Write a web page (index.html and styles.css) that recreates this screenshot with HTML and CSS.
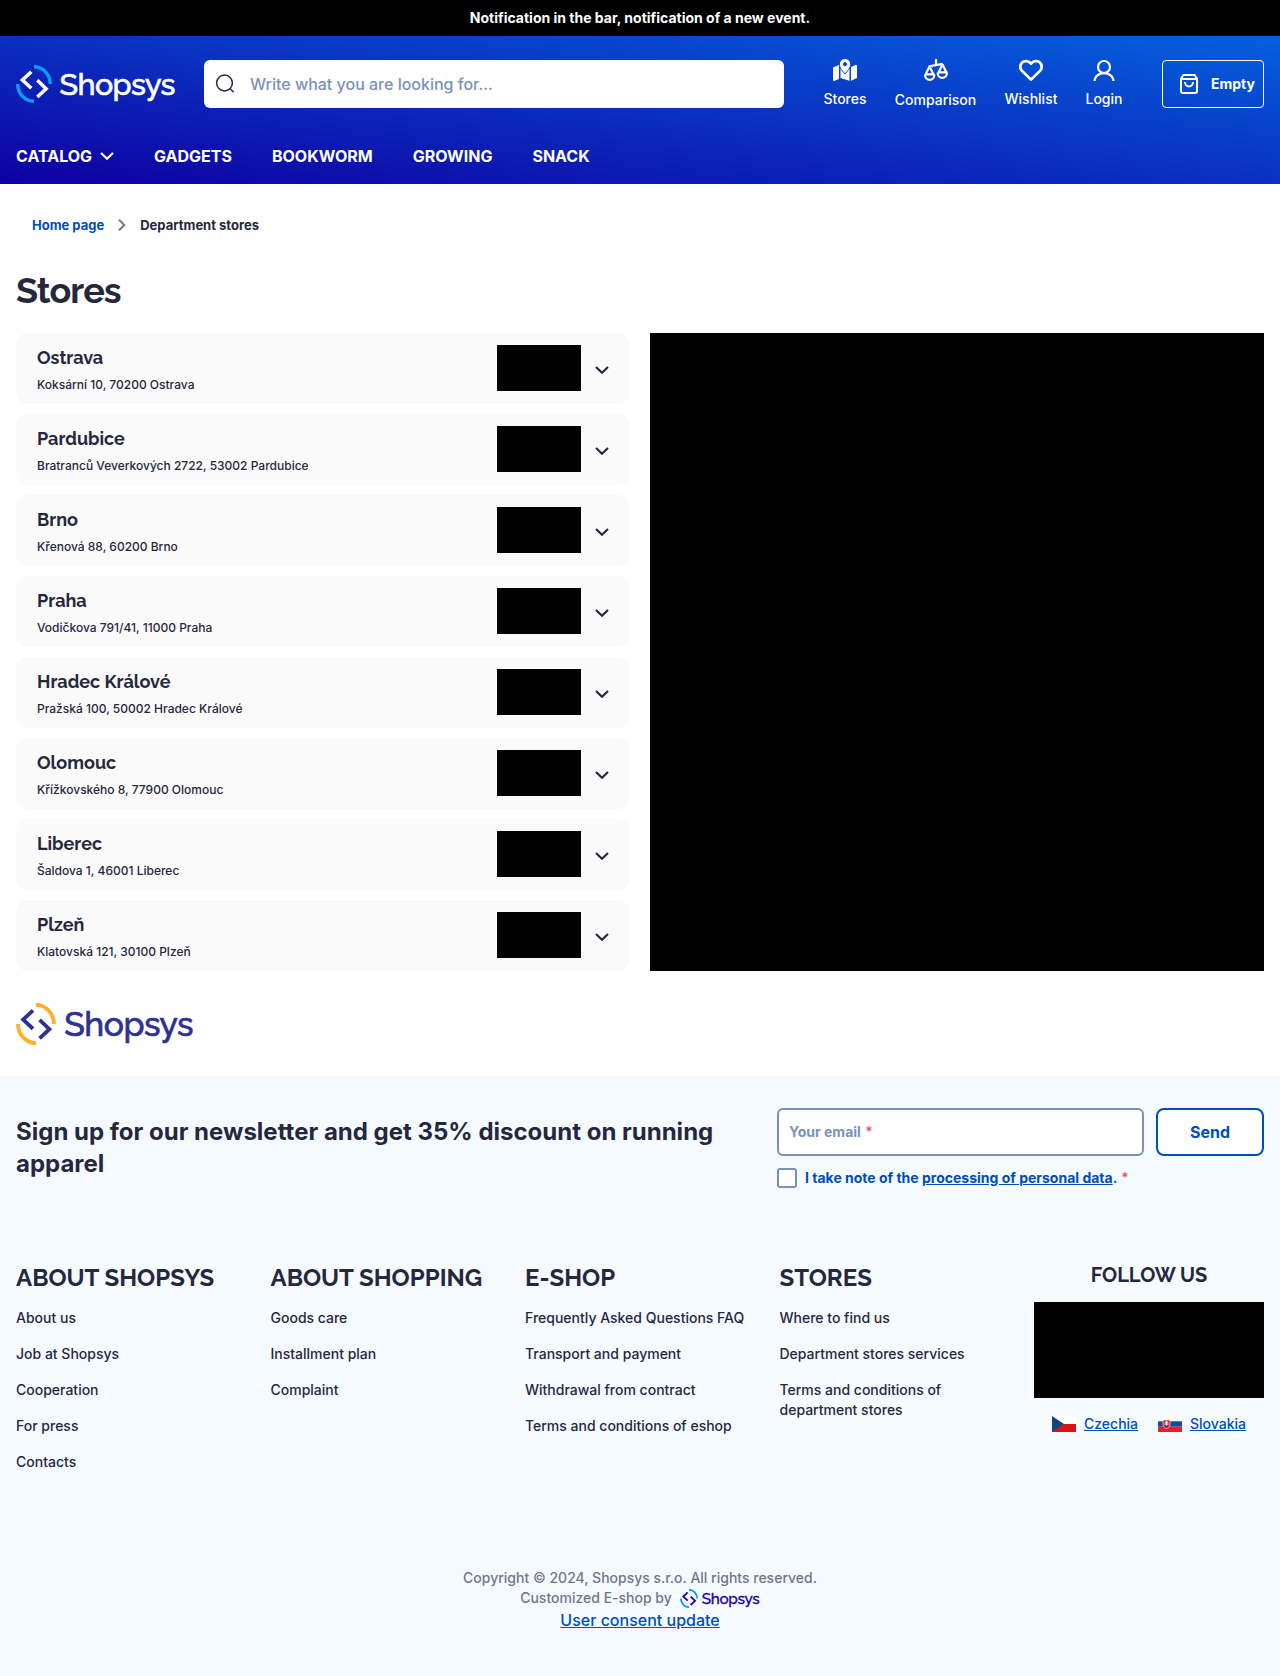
FILE: index.html
```html
<!DOCTYPE html>
<html lang="en">
<head>
<meta charset="utf-8">
<title>Department stores</title>
<link rel="stylesheet" href="styles.css">
</head>
<body>
<svg class="defs" width="0" height="0" aria-hidden="true">
  <symbol id="mark" viewBox="0 0 38 38">
    <path class="arc" d="M18 1.700A16.500 17.300 0 0 1 34.300 19M1.700 19A16.500 17.300 0 0 0 18 36.300"/>
    <path class="angle" d="M15.300 6.700L6.400 15l8.900 8.300M21.300 15.200l8.800 8.500-8.800 8.300"/>
  </symbol>
  <symbol id="chevron" viewBox="0 0 14 8"><path d="M1 1l6 5.700L13 1" fill="none" stroke="currentColor" stroke-width="2.200"/></symbol>
</svg>

<div class="notice">Notification in the bar, notification of a new event.</div>
<header class="header">
  <div class="top">
    <svg class="logo logo-light" viewBox="0 0 160 38"><use href="#mark" width="38" height="38"/><text class="word" x="43.500" y="30" textLength="116">Shopsys</text></svg>
    <div class="search">
      <svg width="20" height="20" viewBox="0 0 20 20" fill="none" stroke="#25283d" stroke-width="1.500"><circle cx="9.500" cy="9" r="7.900"/><path d="M15 14.500L18.700 18.200"/></svg>
      <span>Write what you are looking for...</span>
    </div>
    <nav class="actions">
      <a class="action stores"><svg width="24" height="22" viewBox="0 0 24 22" fill="#fff"><path d="M0 8.500L6 6v14l-5 2q-1 0-1-1zM18 8l5-2.200q1 0 1 1V19l-6 2.700zM7.500 6.500q.5 4 4.500 8 4-4 4.500-7V21.700L7.500 19z"/><path stroke="#0a46cc" stroke-width="1" fill-rule="evenodd" d="M12-.5a5.700 5.700 0 0 1 5.700 5.700c0 3.800-3.500 7-5.700 9.800-2.200-2.800-5.700-6-5.700-9.800A5.700 5.700 0 0 1 12-.5zM12 3.500a1.700 1.700 0 1 0 .01 0z"/></svg><span>Stores</span></a>
      <a class="action comparison"><svg width="24" height="23" viewBox="0 0 24 23" fill="none" stroke="#fff" stroke-width="2.200"><path d="M12 0v6M4.800 7.300L18.800 4.800M5.500 7.500l-4 8M5.500 7.500l4 8M18.500 5.500l-4 8M18.500 5.500l4 8M1 15.400h9.500M14 13.400h9.500"/><path d="M1 15.500c0 7.200 9.400 7.200 9.400 0M13.600 13.500c0 7.200 9.400 7.200 9.400 0"/></svg><span>Comparison</span></a>
      <a class="action wishlist"><svg width="24" height="22" viewBox="0 0 24 22" fill="none" stroke="#fff" stroke-width="2.700" stroke-linejoin="round"><path d="M12 4.600C9.300 1.400 4.900 1.300 2.800 3.900c-2 2.500-1.800 5.800.5 8.200L12 20.600l8.700-8.500c2.300-2.400 2.500-5.700.5-8.200C19.100 1.300 14.700 1.400 12 4.600z"/></svg><span>Wishlist</span></a>
      <a class="action login"><svg width="22" height="22" viewBox="0 0 22 22" fill="none" stroke="#fff" stroke-width="2.200"><circle cx="11" cy="8" r="6"/><path d="M1.500 22C2 11.500 20 11.500 20.500 22"/></svg><span>Login</span></a>
    </nav>
    <a class="cart"><svg width="20" height="22" viewBox="0 0 20 22" fill="none" stroke="#fff" stroke-width="2"><path d="M2 5.500L4.500 2h11L18 5.500V18q0 2-2 2H4q-2 0-2-2zM2 6h16"/><path d="M6 9c0 6 8 6 8 0"/></svg><span>Empty</span></a>
  </div>
  <nav class="menu"><a>CATALOG <svg width="14" height="8"><use href="#chevron"/></svg></a><a>GADGETS</a><a>BOOKWORM</a><a>GROWING</a><a>SNACK</a></nav>
</header>

<main>
  <div class="crumbs"><a>Home page</a><svg width="8" height="12" viewBox="0 0 8 12" fill="none" stroke="#727588" stroke-width="1.900"><path d="M1 .8L6.300 6 1 11.200"/></svg><span>Department stores</span></div>
  <h1>Stores</h1>
  <div class="content">
    <div class="list">
      <div class="store"><div><h2>Ostrava</h2><p>Koksární 10, 70200 Ostrava</p></div><i></i><svg width="14" height="8"><use href="#chevron"/></svg></div>
      <div class="store"><div><h2>Pardubice</h2><p>Bratranců Veverkových 2722, 53002 Pardubice</p></div><i></i><svg width="14" height="8"><use href="#chevron"/></svg></div>
      <div class="store"><div><h2>Brno</h2><p>Křenová 88, 60200 Brno</p></div><i></i><svg width="14" height="8"><use href="#chevron"/></svg></div>
      <div class="store"><div><h2>Praha</h2><p>Vodičkova 791/41, 11000 Praha</p></div><i></i><svg width="14" height="8"><use href="#chevron"/></svg></div>
      <div class="store"><div><h2>Hradec Králové</h2><p>Pražská 100, 50002 Hradec Králové</p></div><i></i><svg width="14" height="8"><use href="#chevron"/></svg></div>
      <div class="store"><div><h2>Olomouc</h2><p>Křížkovského 8, 77900 Olomouc</p></div><i></i><svg width="14" height="8"><use href="#chevron"/></svg></div>
      <div class="store"><div><h2>Liberec</h2><p>Šaldova 1, 46001 Liberec</p></div><i></i><svg width="14" height="8"><use href="#chevron"/></svg></div>
      <div class="store"><div><h2>Plzeň</h2><p>Klatovská 121, 30100 Plzeň</p></div><i></i><svg width="14" height="8"><use href="#chevron"/></svg></div>
    </div>
    <div class="map"></div>
  </div>
  <svg class="logo logo-color" viewBox="0 0 160 38"><use href="#mark" width="38" height="38"/><text class="word" x="43.500" y="30" textLength="117">Shopsys</text></svg>
</main>

<footer>
  <section class="newsletter">
    <p class="pitch">Sign up for our newsletter and get 35% discount on running apparel</p>
    <form>
      <div class="fields"><div class="email">Your email <em>*</em></div><button type="button">Send</button></div>
      <div class="consent"><b class="box"></b><span>I take note of the <u>processing of personal data</u>. <em>*</em></span></div>
    </form>
  </section>
  <section class="columns">
    <div><h3>ABOUT SHOPSYS</h3><a>About us</a><a>Job at Shopsys</a><a>Cooperation</a><a>For press</a><a>Contacts</a></div>
    <div><h3>ABOUT SHOPPING</h3><a>Goods care</a><a>Installment plan</a><a>Complaint</a></div>
    <div><h3>E-SHOP</h3><a>Frequently Asked Questions FAQ</a><a>Transport and payment</a><a>Withdrawal from contract</a><a>Terms and conditions of eshop</a></div>
    <div><h3>STORES</h3><a>Where to find us</a><a>Department stores services</a><a>Terms and conditions of department stores</a></div>
    <div class="follow"><h4>FOLLOW US</h4><div class="social"></div>
      <div class="langs">
        <svg width="24" height="16" viewBox="0 0 24 16"><path fill="#fff" d="M0 0h24v8H0z"/><path fill="#d7141a" d="M0 8h24v8H0z"/><path fill="#11457e" d="M0 0l12 8-12 8z"/></svg><u>Czechia</u>
        <svg class="sk" width="24" height="16" viewBox="0 0 24 16"><path fill="#fff" d="M0 0h24v6H0z"/><path fill="#0b4ea2" d="M0 5.300h24v5.400H0z"/><path fill="#ee1c25" d="M0 10.700h24V16H0z"/><path fill="#ee1c25" stroke="#fff" stroke-width=".6" d="M5 4h7v4.500c0 2-1.500 3.300-3.500 4-2-.7-3.500-2-3.500-4z"/><path fill="none" stroke="#fff" d="M8.500 4.700V10M7 6.300h3M6.500 8h4"/><path fill="#0b4ea2" d="M6 10.200q2.500-1.500 5 0l-2.500 2z"/></svg><u>Slovakia</u>
      </div>
    </div>
  </section>
  <section class="legal">
    <div>Copyright © 2024, Shopsys s.r.o. All rights reserved.</div>
    <div class="by">Customized E-shop by <svg class="logo logo-small" viewBox="0 0 160 38"><use href="#mark" width="38" height="38"/><text class="word" x="43.500" y="30" textLength="116">Shopsys</text></svg></div>
    <a>User consent update</a>
  </section>
</footer>
</body>
</html>
```
FILE: styles.css
```css
* { box-sizing: border-box; }
body { margin: 0; background: #fff; color: #25283d; font: 500 14px/20px Inter, sans-serif; }
svg { display: block; flex: none; }
.defs { position: absolute; }
h1, h2, h3, h4, p { margin: 0; }
h1, h2, h3, h4 { font-family: Raleway, Lato, sans-serif; font-weight: 700; }
em { margin-left: 1px; color: #ec5353; font-style: normal; font-weight: 500; }

.logo { width: 160px; height: 38px; overflow: visible; }
.arc, .angle { fill: none; stroke-width: 3.5; }
.arc { stroke: var(--arc); }
.angle { stroke: var(--ink); }
.word { fill: var(--ink); stroke: var(--ink); stroke-width: .6; font: 500 30.5px Raleway, Lato, sans-serif; }
.logo-light { --arc: #0a9bff; --ink: #fff; }
.logo-color { --arc: #fcb32b; --ink: #2e3192; width: 179px; height: 42px; margin: 32px 0 0 -1px; }
.logo-small { --arc: #0a9bff; --ink: #1a00a0; width: 80px; height: 19px; margin-top: 1px; }

.notice { height: 36px; padding-top: 8px; background: #000; color: #fff; font-weight: 700; text-align: center; }
.header { height: 148px; padding: 24px 16px 0; color: #fff; background: linear-gradient(to top right, #0f00a0, #0560dd); }
.top { display: flex; align-items: center; height: 48px; }
.search { display: flex; align-items: center; gap: 15px; width: 580px; height: 48px; margin-left: 28px; padding: 0 11px; background: #fff; border-radius: 6px; color: #7892bc; font-size: 16px; }
.actions { display: flex; height: 50px; margin-left: 39.5px; gap: 28px; }
.action { display: flex; flex-direction: column; align-items: center; gap: 8px; }
.stores { width: 43px; }
.comparison { width: 82px; }
.wishlist { width: 53px; }
.login { width: 37px; }
.cart { display: flex; align-items: center; gap: 12px; width: 102px; height: 48px; margin-left: auto; padding-left: 16px; border: 1px solid #fff; border-radius: 4px; font-weight: 700; }
.menu { display: flex; gap: 40px; margin-top: 36px; font-size: 16px; line-height: 24px; font-weight: 700; }
.menu a { display: flex; align-items: center; gap: 8px; }

main { height: 892px; padding: 31px 16px 0; }
.crumbs { display: flex; align-items: center; gap: 14px; height: 20px; padding-left: 16px; font-size: 13px; font-weight: 700; }
.crumbs a { color: #004eb6; }
h1 { margin-top: 30px; height: 68px; font-size: 36px; line-height: 50px; letter-spacing: -.9px; }
.content { display: flex; gap: 20px; }
.list { width: 614px; display: grid; gap: 10px; }
.store { display: flex; align-items: center; height: 71px; padding: 3px 21px 0; background: #fafafa; border-radius: 12px; }
.store > div { flex: 1; }
.store h2 { padding-top: 1px; font-size: 18px; line-height: 24px; }
.store p { margin-top: 5px; font-size: 12px; line-height: 20px; }
.store i { width: 84px; height: 46px; margin: 0 14px 5px 0; background: #000; }
.map { flex: 1; background: #000; }

footer { height: 600px; padding: 32px 16px 0; background: #f5faff; }
.newsletter { display: flex; justify-content: space-between; height: 153px; }
.pitch { width: 712px; padding-top: 8px; font-size: 24px; line-height: 32px; font-weight: 700; }
form { width: 487px; }
.fields { display: flex; gap: 12px; }
.email { flex: 1; height: 48px; padding: 12px 10px; background: #fff; border: 2px solid #7892bc; border-radius: 6px; color: #7892bc; font-weight: 700; }
button { width: 108px; border: 2px solid #004eb6; border-radius: 8px; background: #fff; color: #004eb6; font: 700 16px Inter, sans-serif; }
.consent { display: flex; gap: 8px; margin-top: 12px; color: #004eb6; font-weight: 700; }
.box { width: 20px; height: 20px; background: #fff; border: 2px solid #7892bc; border-radius: 3px; }
.columns { display: grid; grid-template-columns: repeat(5, 230px); justify-content: space-between; height: 275px; }
h3 { height: 47px; font-size: 24px; line-height: 34px; white-space: nowrap; }
.columns a { display: block; margin-bottom: 16px; }
h4 { height: 41px; font-size: 20px; line-height: 28px; text-align: center; }
.social { height: 96px; background: #000; }
.langs { display: flex; align-items: center; justify-content: center; gap: 8px; margin-top: 16px; color: #004eb6; }
.sk { margin-left: 12px; }
.legal { display: flex; flex-direction: column; align-items: center; padding-top: 32px; color: #727588; }
.by { display: flex; gap: 8px; height: 20px; }
.legal a { color: #004eb6; font-size: 16px; line-height: 24px; text-decoration: underline; }
```
